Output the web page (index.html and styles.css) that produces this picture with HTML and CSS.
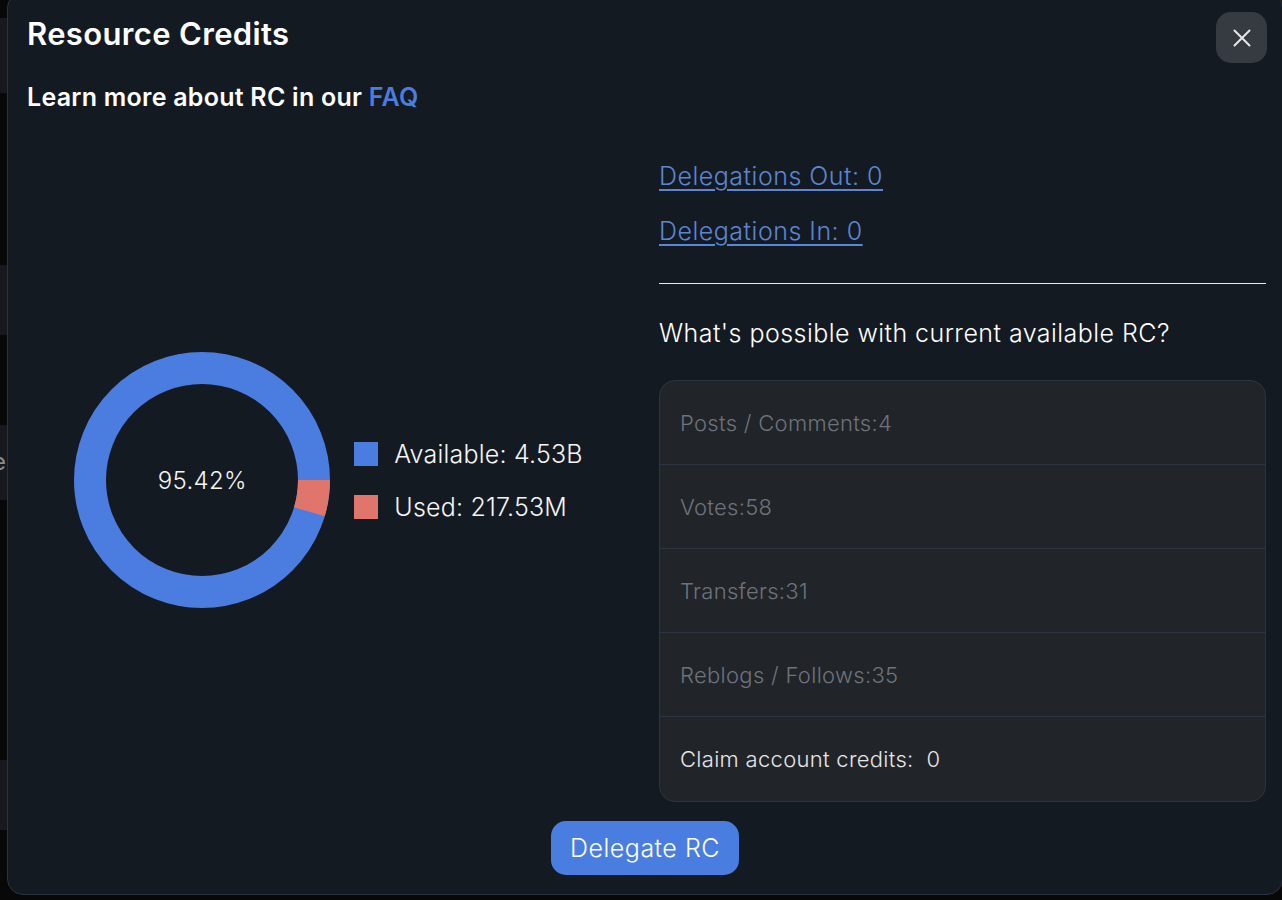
FILE: index.html
```html
<!DOCTYPE html>
<html lang="en">
<head>
<meta charset="utf-8">
<title>Resource Credits</title>
<link rel="stylesheet" href="styles.css">
</head>
<body>
<div class="backdrop">
  <div class="strip s1"></div>
  <div class="strip s2"></div>
  <div class="strip s3"><span>e</span></div>
  <div class="strip s4"><span>t</span></div>
</div>
<div class="modal">
  <div class="header">
    <h1 class="title">Resource Credits</h1>
    <button class="close" aria-label="Close">
      <svg width="20" height="20" viewBox="0 0 20 20"><path d="M2.5 2.5 L17.5 17.5 M17.5 2.5 L2.5 17.5" stroke="#e6e6e6" stroke-width="2" stroke-linecap="round" fill="none"/></svg>
    </button>
  </div>
  <p class="subtitle">Learn more about RC in our <a class="faq" href="#">FAQ</a></p>
  <div class="body">
    <div class="chart-col">
      <div class="donut">
        <svg width="256" height="256" viewBox="0 0 256 256">
          <circle cx="128" cy="128" r="112" fill="none" stroke="#4a7ddf" stroke-width="32"/>
          <circle cx="128" cy="128" r="112" fill="none" stroke="#e0756c" stroke-width="32" stroke-dasharray="32.2 703.7"/>
        </svg>
        <span class="pct">95.42%</span>
      </div>
      <ul class="legend">
        <li><span class="sw blue"></span>Available: 4.53B</li>
        <li><span class="sw red"></span>Used: 217.53M</li>
      </ul>
    </div>
    <div class="info-col">
      <a class="deleg" href="#">Delegations Out: 0</a>
      <a class="deleg in" href="#">Delegations In: 0</a>
      <hr class="divider">
      <p class="question">What's possible with current available RC?</p>
      <div class="card">
        <div class="row muted">Posts / Comments:4</div>
        <div class="row muted">Votes:58</div>
        <div class="row muted">Transfers:31</div>
        <div class="row muted">Reblogs / Follows:35</div>
        <div class="row light">Claim account credits:&nbsp; 0</div>
      </div>
    </div>
  </div>
  <div class="footer">
    <button class="delegate">Delegate RC</button>
  </div>
</div>
</body>
</html>
```
FILE: styles.css
```css
* { box-sizing: border-box; }
html, body { margin: 0; padding: 0; }
body {
  width: 1282px;
  height: 900px;
  overflow: hidden;
  background: #080808;
  font-family: Inter, "Noto Sans", sans-serif;
  color: #f2f2f2;
  position: relative;
}
.backdrop { position: absolute; inset: 0; }
.strip {
  position: absolute;
  left: 0;
  width: 40px;
  background: #17191e;
  color: #8a8a8a;
  font-size: 24px;
  overflow: hidden;
}
.strip span { position: absolute; left: -8px; }
.s1 { top: 18px; height: 75px; }
.s2 { top: 265px; height: 70px; }
.s3 { top: 425px; height: 75px; }
.s3 span { top: 22px; }
.s4 { top: 760px; height: 70px; }
.s4 span { top: 90px; }
.modal {
  position: absolute;
  left: 7px;
  top: -8px;
  width: 1276px;
  height: 903px;
  background: #141a22;
  border: 1px solid #2b3240;
  border-radius: 16px;
  padding: 19px 15px 0 19px;
  display: flex;
  flex-direction: column;
}
.header {
  display: flex;
  justify-content: space-between;
  align-items: flex-start;
}
.title {
  margin: 4px 0 0 0;
  font-size: 31px;
  line-height: 36px;
  font-weight: 600;
  color: #ffffff;
  letter-spacing: 0.35px;
}
.close {
  width: 51px;
  height: 51px;
  border: none;
  border-radius: 15px;
  background: #363b41;
  display: flex;
  align-items: center;
  justify-content: center;
  padding: 0;
  cursor: pointer;
}
.subtitle {
  margin: 20px 0 0 0;
  font-size: 25px;
  line-height: 29px;
  font-weight: 600;
  color: #ffffff;
  letter-spacing: 0.25px;
}
.faq { color: #4a7ddf; text-decoration: none; }
.body {
  display: grid;
  grid-template-columns: 613px 607px;
  column-gap: 19px;
  align-items: center;
  margin-top: 50px;
}
.chart-col {
  display: flex;
  align-items: center;
  justify-content: center;
  gap: 24px;
  padding-right: 10px;
  padding-bottom: 4px;
}
.donut {
  position: relative;
  width: 256px;
  height: 256px;
}
.donut svg { display: block; }
.pct {
  position: absolute;
  inset: 0;
  display: flex;
  align-items: center;
  justify-content: center;
  font-size: 24px;
  font-weight: 300;
  letter-spacing: 0.3px;
  color: #f5f5f5;
}
.legend {
  list-style: none;
  margin: 0;
  padding: 0;
  display: flex;
  flex-direction: column;
  gap: 25px;
  font-size: 25px;
  font-weight: 300;
  letter-spacing: 0.2px;
  color: #f5f5f5;
}
.legend li { display: flex; align-items: center; gap: 16px; line-height: 28px; }
.sw { width: 24px; height: 24px; display: inline-block; }
.sw.blue { background: #4a7ddf; }
.sw.red { background: #e0756c; }
.info-col {
  display: flex;
  flex-direction: column;
  align-items: flex-start;
}
.deleg {
  color: #5b86d4;
  font-size: 25px;
  font-weight: 300;
  letter-spacing: 0.5px;
  line-height: 29px;
  text-decoration: underline;
  text-underline-offset: 4px;
  text-decoration-thickness: 2px;
}
.deleg.in { margin-top: 26px; }
.divider {
  align-self: stretch;
  border: none;
  border-top: 1px solid #e8e8e8;
  margin: 37px 0 0 0;
}
.question {
  margin: 35px 0 0 0;
  font-size: 25px;
  font-weight: 300;
  letter-spacing: 0.45px;
  line-height: 29px;
  color: #ffffff;
}
.card {
  align-self: stretch;
  margin-top: 32px;
  background: #212429;
  border: 1px solid #2c3442;
  border-radius: 16px;
  overflow: hidden;
}
.row {
  height: 84px;
  display: flex;
  align-items: center;
  padding-left: 20px;
  font-size: 22px;
  font-weight: 300;
  letter-spacing: 0.3px;
  border-bottom: 1px solid #2c3442;
}
.row:last-child { border-bottom: none; height: 84px; }
.row.muted { color: #6e737b; }
.row.light { color: #e6e6e6; }
.footer {
  display: flex;
  justify-content: center;
  margin-top: 19px;
  padding-right: 4px;
}
.delegate {
  height: 54px;
  padding: 0 19px;
  border: none;
  border-radius: 15px;
  background: #4a7de0;
  color: #ffffff;
  font-family: Inter, "Noto Sans", sans-serif;
  font-size: 25px;
  font-weight: 300;
  letter-spacing: 0.5px;
}
```
